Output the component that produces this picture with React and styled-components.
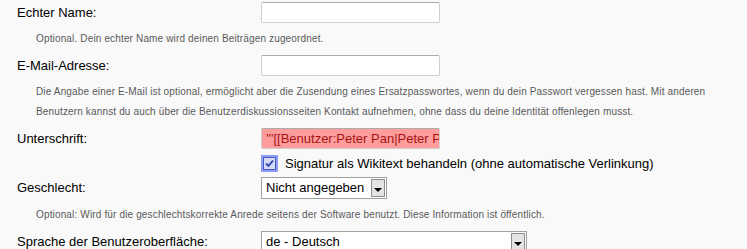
import React from "react"
import styled, { createGlobalStyle } from "styled-components"

const GlobalStyle = createGlobalStyle`
  html, body {
    margin: 0;
    padding: 0;
    background: #f9f9f9;
    font-family: "Liberation Sans", Arial, sans-serif;
    color: #000;
    overflow: hidden;
  }
`

const Form = styled.div`
  width: 747px;
  height: 249px;
  overflow: hidden;
`

const FieldRow = styled.div`
  display: grid;
  grid-template-columns: 261px 1fr;
  align-items: center;
  padding: 2px 0;
`

const Label = styled.div`
  padding-left: 17px;
  font-size: 13px;
  line-height: 16px;
`

const Help = styled.div`
  padding: 4px 0 4px 36px;
  font-size: 10px;
  line-height: 20px;
  color: #5a5a5a;
  letter-spacing: 0.15px;
  white-space: nowrap;
`

const TextInput = styled.div`
  box-sizing: border-box;
  width: 179px;
  height: 21px;
  border: 1px solid #cfcfcf;
  border-top-color: #ababab;
  border-radius: 2px;
  background: ${p => (p.$error ? "#ff9c9c" : "#fff")};
  color: #a31515;
  font-size: 13px;
  line-height: 19px;
  padding-left: 4px;
  overflow: hidden;
  white-space: nowrap;
`

const CheckRow = styled.div`
  display: flex;
  align-items: center;
  gap: 7px;
  height: 24px;
  padding-left: 261px;
  font-size: 13px;
`

const CheckHalo = styled.span`
  display: flex;
  align-items: center;
  justify-content: center;
  width: 17px;
  height: 17px;
  background: #8f9bf8;
`

const CheckBox = styled.span`
  box-sizing: border-box;
  display: flex;
  align-items: center;
  justify-content: center;
  width: 13px;
  height: 13px;
  border: 1px solid #4a5ab8;
  background: #d6daf6;
`

const Select = styled.div`
  box-sizing: border-box;
  display: flex;
  align-items: stretch;
  width: ${p => p.$width}px;
  height: 22px;
  border: 1px solid #a0a0a0;
  background: #fff;
  font-size: 13px;
`

const SelectValue = styled.span`
  flex: 1;
  padding-left: 4px;
  line-height: 20px;
  white-space: nowrap;
  overflow: hidden;
`

const SelectButton = styled.span`
  box-sizing: border-box;
  width: 14px;
  margin: 1px;
  display: flex;
  align-items: center;
  justify-content: center;
  background: #e4e4e4;
  border: 1px solid #8c8c8c;
`

const Arrow = styled.span`
  width: 0;
  height: 0;
  margin-top: 3px;
  border-left: 4px solid transparent;
  border-right: 4px solid transparent;
  border-top: 4px solid #000;
`

const Dropdown = ({ value, width }) => (
  <Select $width={width}>
    <SelectValue>{value}</SelectValue>
    <SelectButton>
      <Arrow />
    </SelectButton>
  </Select>
)

const App = () => (
  <Form>
    <GlobalStyle />
    <FieldRow>
      <Label>Echter Name:</Label>
      <TextInput />
    </FieldRow>
    <Help>Optional. Dein echter Name wird deinen Beiträgen zugeordnet.</Help>
    <FieldRow>
      <Label>E-Mail-Adresse:</Label>
      <TextInput />
    </FieldRow>
    <Help>
      Die Angabe einer E-Mail ist optional, ermöglicht aber die Zusendung eines Ersatzpasswortes, wenn du dein Passwort vergessen hast. Mit anderen
      <br />
      Benutzern kannst du auch über die Benutzerdiskussionsseiten Kontakt aufnehmen, ohne dass du deine Identität offenlegen musst.
    </Help>
    <FieldRow>
      <Label>Unterschrift:</Label>
      <TextInput $error>'''[[Benutzer:Peter Pan|Peter Pan]]'''</TextInput>
    </FieldRow>
    <CheckRow>
      <CheckHalo>
        <CheckBox>
          <svg width="9" height="9" viewBox="0 0 9 9">
            <path d="M1 4.5 L3.5 7 L8 1.5" fill="none" stroke="#2a3fa8" strokeWidth="1.8" />
          </svg>
        </CheckBox>
      </CheckHalo>
      <span>Signatur als Wikitext behandeln (ohne automatische Verlinkung)</span>
    </CheckRow>
    <FieldRow>
      <Label>Geschlecht:</Label>
      <Dropdown value="Nicht angegeben" width={126} />
    </FieldRow>
    <Help>Optional: Wird für die geschlechtskorrekte Anrede seitens der Software benutzt. Diese Information ist öffentlich.</Help>
    <FieldRow>
      <Label>Sprache der Benutzeroberfläche:</Label>
      <Dropdown value="de - Deutsch" width={266} />
    </FieldRow>
  </Form>
)

export default App
